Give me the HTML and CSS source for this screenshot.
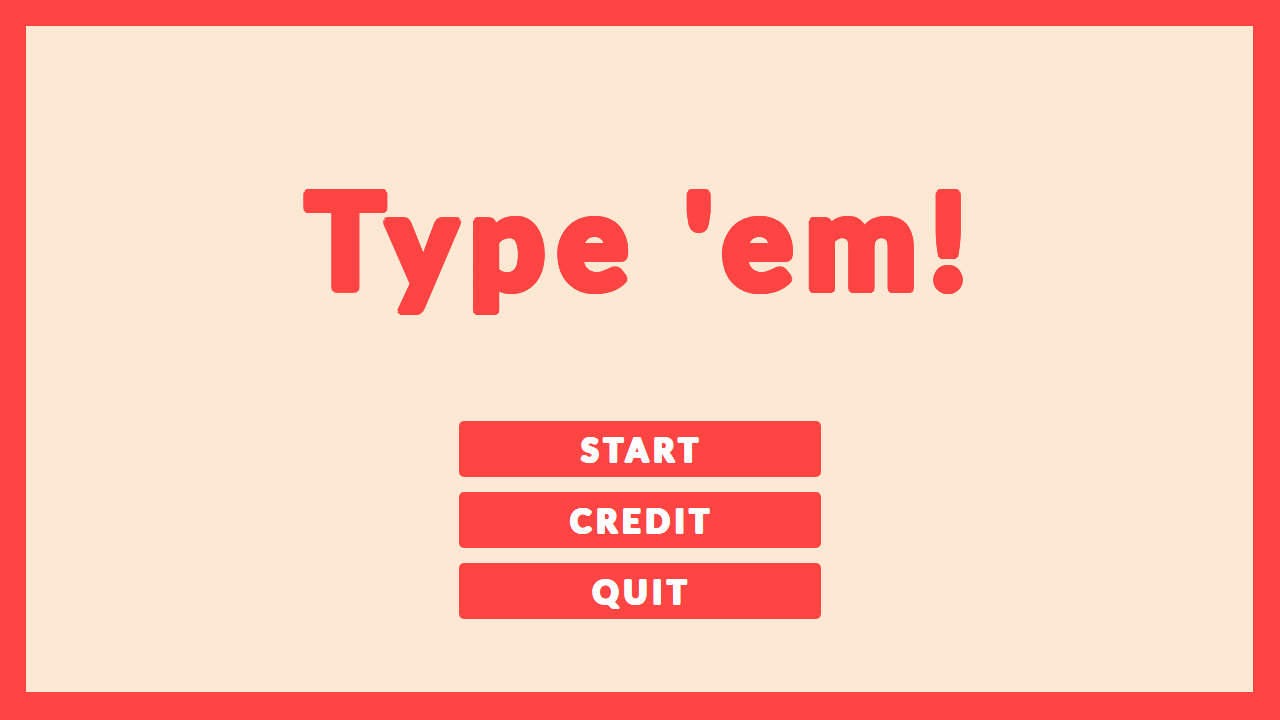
FILE: index.html
```html
<!DOCTYPE html>
<html>
<head>
<meta charset="utf-8">
<link rel="stylesheet" href="styles.css">
</head>
<body>
<div class="frame">
  <main class="screen">
    <h1 class="title">Type 'em!</h1>
    <nav class="menu">
      <button class="btn">START</button>
      <button class="btn">CREDIT</button>
      <button class="btn">QUIT</button>
    </nav>
  </main>
</div>
</body>
</html>
```
FILE: styles.css
```css
html, body {
  margin: 0;
  padding: 0;
  width: 1280px;
  height: 720px;
  overflow: hidden;
  background: #ff4444;
}
.frame {
  box-sizing: border-box;
  width: 1280px;
  height: 720px;
  padding: 26px 27px 28px 26px;
  display: flex;
}
.screen {
  flex: 1;
  background: #fde8d3;
  display: flex;
  flex-direction: column;
  align-items: center;
}
.title {
  margin: 146px 0 0 0;
  font-family: Lato, "Open Sans", sans-serif;
  font-weight: 900;
  font-size: 132px;
  line-height: 1;
  color: #ff4444;
  letter-spacing: 12.5px;
  padding-left: 6px;
  height: 249px;
  text-shadow:
    4px 0 0 #ff4444, -4px 0 0 #ff4444, 0 4px 0 #ff4444, 0 -4px 0 #ff4444,
    2.8px 2.8px 0 #ff4444, -2.8px 2.8px 0 #ff4444, 2.8px -2.8px 0 #ff4444, -2.8px -2.8px 0 #ff4444,
    3.7px 1.5px 0 #ff4444, -3.7px 1.5px 0 #ff4444, 3.7px -1.5px 0 #ff4444, -3.7px -1.5px 0 #ff4444,
    1.5px 3.7px 0 #ff4444, -1.5px 3.7px 0 #ff4444, 1.5px -3.7px 0 #ff4444, -1.5px -3.7px 0 #ff4444,
    2px 0 0 #ff4444, -2px 0 0 #ff4444, 0 2px 0 #ff4444, 0 -2px 0 #ff4444;
}
.menu {
  display: flex;
  flex-direction: column;
  gap: 15px;
}
.btn {
  width: 362px;
  height: 56px;
  border: none;
  border-radius: 5px;
  background: #ff4444;
  color: #ffffff;
  font-family: Lato, "Open Sans", sans-serif;
  font-weight: 900;
  font-size: 32px;
  letter-spacing: 5px;
  padding: 0 0 0 5px;
  text-shadow:
    1.2px 0 0 #fff, -1.2px 0 0 #fff, 0 1.2px 0 #fff, 0 -1.2px 0 #fff,
    0.9px 0.9px 0 #fff, -0.9px 0.9px 0 #fff, 0.9px -0.9px 0 #fff, -0.9px -0.9px 0 #fff;
}
```
